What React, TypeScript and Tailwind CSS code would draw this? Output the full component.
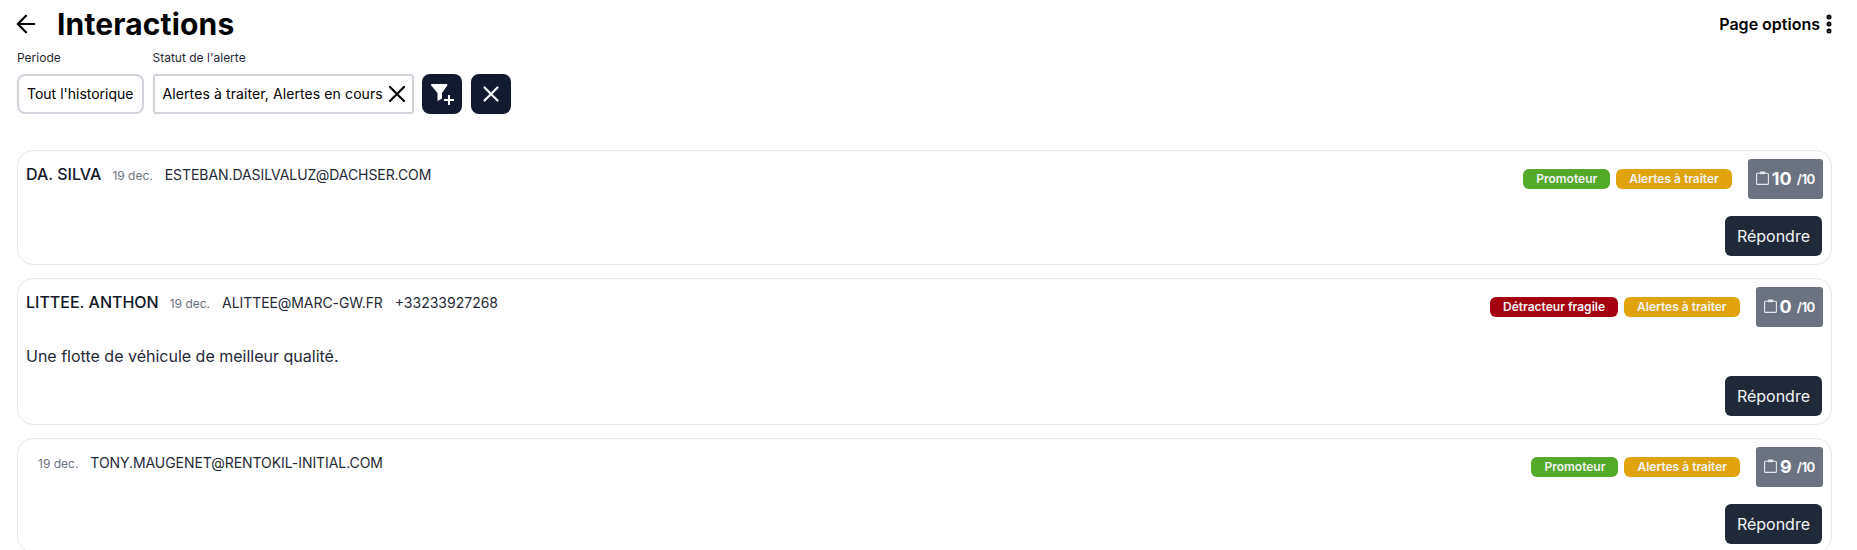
import {ArrowLeft, EllipsisVertical, X} from "lucide-react";

type Row = {
    name?: string;
    email: string;
    phone?: string;
    comment?: string;
    badge: string;
    badgeClass: string;
    score: number;
};

const rows: Row[] = [
    {name: "DA. SILVA", email: "ESTEBAN.DASILVALUZ@DACHSER.COM", badge: "Promoteur", badgeClass: "bg-[#52a92a]", score: 10},
    {
        name: "LITTEE. ANTHON",
        email: "ALITTEE@MARC-GW.FR",
        phone: "+33233927268",
        comment: "Une flotte de véhicule de meilleur qualité.",
        badge: "Détracteur fragile",
        badgeClass: "bg-[#a50010]",
        score: 0,
    },
    {email: "TONY.MAUGENET@RENTOKIL-INITIAL.COM", badge: "Promoteur", badgeClass: "bg-[#52a92a]", score: 9},
];

function FilterPlusIcon() {
    return (
        <svg width="40" height="40" viewBox="0 0 40 40" fill="currentColor">
            <path d="M10 10h14.5a1 1 0 0 1 .8 1.6L20 19v5.5l-4.5 2.5V19l-6.3-7.4A1 1 0 0 1 10 10z"/>
            <path d="M27 21v10M22 26h10" stroke="currentColor" strokeWidth="2" fill="none"/>
        </svg>
    );
}

function ClipboardIcon() {
    return (
        <svg width="13" height="14" viewBox="0 0 13 14" fill="none" className="-mt-[3px]">
            <rect x="0.6" y="2.2" width="11.8" height="11.2" rx="1" stroke="#e5e7eb" strokeWidth="1.1"/>
            <rect x="3.8" y="0.4" width="5.4" height="2.8" rx="0.6" fill="#e5e7eb"/>
        </svg>
    );
}

function InteractionCard({row}: { row: Row }) {
    return (
        <div className="flex flex-col rounded-2xl border border-[#e5e7eb] bg-white p-2">
            {/* ligne du haut */}
            <div className="mb-[17px] flex items-start justify-between">
                <div className="flex h-8 items-baseline">
                    <span className={`text-base leading-[30px] font-[450] text-[#111827] ${row.name ? "mr-[11px]" : "mr-3 w-0"}`}>
                        {row.name ?? "\u00a0"}
                    </span>
                    <span className="mr-3 text-xs text-[#6b7280]">19 dec.</span>
                    <span className="mr-3 text-sm tracking-[-0.005em] text-[#1f2937]">{row.email}</span>
                    {row.phone && <span className="text-sm text-[#1f2937]">{row.phone}</span>}
                </div>
                <div className="flex items-start">
                    <div className="mt-[10px] flex gap-[6px]">
                        <span className={`flex h-5 items-center rounded-md px-[13px] text-xs font-semibold text-[#f3f4f6] ${row.badgeClass}`}>
                            {row.badge}
                        </span>
                        <span className="flex h-5 items-center rounded-md bg-[#e0a30b] px-[13px] text-xs font-semibold text-[#f3f4f6]">
                            Alertes à traiter
                        </span>
                    </div>
                    <div className="ml-4 flex h-10 items-center rounded-[3px] bg-[#6b7280] px-2 text-white">
                        <ClipboardIcon/>
                        <span className="ml-[3px] text-lg font-bold">{row.score}</span>
                        <span className="mt-[2px] ml-[5px] text-[13px] font-bold tracking-[-0.03em] text-[#f3f4f6]">/10</span>
                    </div>
                </div>
            </div>

            {row.comment && <p className="mb-2 text-base text-[#1f2937]">{row.comment}</p>}

            <div className="mr-px flex justify-end">
                <button className="h-10 rounded-md bg-[#1f2937] px-3 text-base text-[#f3f4f6]">Répondre</button>
            </div>
        </div>
    );
}

export default function App() {
    return (
        <div className="h-[550px] overflow-hidden bg-white px-[17px] font-['Inter',sans-serif] text-black">
            {/* entête */}
            <div className="flex h-[48px] items-center justify-between">
                <div className="flex items-center">
                    <ArrowLeft size={28} strokeWidth={1.9} className="-ml-[5px]"/>
                    <h1 className="ml-[17px] text-3xl font-bold tracking-[0.005em]">Interactions</h1>
                </div>
                <div className="flex items-center text-base font-semibold">
                    Page options
                    <EllipsisVertical size={24} strokeWidth={3} className="-mr-px -ml-[3px]"/>
                </div>
            </div>

            {/* filtres */}
            <div className="mt-[2px] flex items-end gap-2">
                <div className="mr-px">
                    <div className="mb-[8px] text-xs leading-4 text-[#1f2937]">Periode</div>
                    <div className="flex h-10 items-center rounded-lg border-2 border-[#d1d5db] px-2 text-sm">
                        Tout l'historique
                    </div>
                </div>
                <div>
                    <div className="mb-[8px] text-xs leading-4 text-[#1f2937]">Statut de l'alerte</div>
                    <div className="flex h-10 items-center rounded-[3px] border-2 border-[#d1d5db] pr-px pl-2 text-sm tracking-[0.1px]">
                        Alertes à traiter, Alertes en cours
                        <X size={28} strokeWidth={1.9}/>
                    </div>
                </div>
                <button className="flex h-10 w-10 items-center justify-center rounded-lg bg-[#111a2e] text-white">
                    <FilterPlusIcon/>
                </button>
                <button className="ml-px flex h-10 w-10 items-center justify-center rounded-lg bg-[#111a2e] text-white">
                    <X size={26} strokeWidth={2}/>
                </button>
            </div>

            {/* liste */}
            <div className="mt-9 mr-2 flex flex-col gap-[13px]">
                {rows.map((row) => (
                    <InteractionCard key={row.email} row={row}/>
                ))}
            </div>
        </div>
    );
}
